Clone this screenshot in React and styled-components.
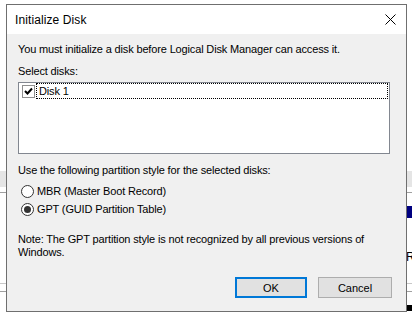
import React from 'react';
import styled, { createGlobalStyle } from 'styled-components';

const GlobalStyle = createGlobalStyle`
  html, body {
    margin: 0;
    padding: 0;
    background: #fff;
  }
  body {
    font-family: "Liberation Sans", Arial, sans-serif;
    font-size: 11px;
    color: #000;
  }
`;

const Screen = styled.div`
  position: relative;
  width: 412px;
  height: 316px;
  overflow: hidden;
  background: #fff;
  display: flex;
  flex-direction: column;
`;

// the app window behind the dialog, only a sliver is visible
const Strip = styled.div`
  height: ${p => p.h}px;
  margin-top: ${p => p.top || 0}px;
  margin-left: ${p => p.left || 0}px;
  background: ${p => p.bg};
  flex-shrink: 0;
`;

const BackText = styled.div`
  margin-top: ${p => p.top}px;
  padding-left: 406px;
  height: 14px;
  line-height: 14px;
  font-size: 12px;
  color: #000;
  white-space: nowrap;
`;

const Dialog = styled.div`
  position: absolute;
  left: 6px;
  top: 4px;
  width: 401px;
  height: 308px;
  box-sizing: border-box;
  border: 1px solid #6f6f6f;
  background: #f0f0f0;
  display: flex;
  flex-direction: column;
`;

const TitleBar = styled.div`
  height: 29px;
  background: #fff;
  display: flex;
  align-items: center;
  justify-content: space-between;
  padding: 0 10px 0 8px;
  flex-shrink: 0;
`;

const Title = styled.span`
  font-family: "Liberation Sans", Arial, sans-serif;
  font-size: 12px;
  letter-spacing: 0.1px;
  color: #000;
`;

const Body = styled.div`
  flex: 1;
  padding: 9px 16px 0 11px;
  display: flex;
  flex-direction: column;
  letter-spacing: -0.15px;
`;

const Line = styled.div`
  line-height: 13px;
  white-space: nowrap;
  margin-top: ${p => p.top || 0}px;
`;

const ListBox = styled.div`
  margin-top: 4px;
  width: 372px;
  height: 72px;
  box-sizing: border-box;
  border: 1px solid #828790;
  background: #fff;
  padding: 0 1px;
`;

const ListItem = styled.div`
  display: flex;
  align-items: center;
  height: 16px;
  gap: 1px;
  padding-left: 2px;
`;

const CheckBox = styled.span`
  width: 13px;
  height: 13px;
  box-sizing: border-box;
  border: 1px solid #8f8f8f;
  background: #fff;
  display: flex;
  align-items: center;
  justify-content: center;
  flex-shrink: 0;
`;

const FocusLabel = styled.span`
  flex: 1;
  height: 16px;
  box-sizing: border-box;
  border: 1px dotted #000;
  line-height: 14px;
  padding-left: 2px;
`;

const RadioGroup = styled.div`
  margin-top: 5px;
  display: flex;
  flex-direction: column;
`;

const RadioRow = styled.label`
  display: flex;
  align-items: center;
  gap: 3px;
  height: 18px;
  padding-left: 3px;
`;

const Radio = styled.span`
  width: 13px;
  height: 13px;
  box-sizing: border-box;
  border-radius: 50%;
  border: 1px solid #333;
  background: #fff;
  display: flex;
  align-items: center;
  justify-content: center;
  &::after {
    content: '';
    width: 7px;
    height: 7px;
    border-radius: 50%;
    background: ${p => (p.checked ? '#333' : 'transparent')};
  }
`;

const Buttons = styled.div`
  margin-top: auto;
  margin-bottom: 13px;
  margin-right: -2px;
  display: flex;
  justify-content: flex-end;
  gap: 11px;
`;

const Button = styled.button`
  width: ${p => p.w}px;
  height: 21px;
  box-sizing: border-box;
  background: #e1e1e1;
  border: ${p => (p.primary ? '2px solid #0078d7' : '1px solid #adadad')};
  font-family: "Liberation Sans", Arial, sans-serif;
  font-size: 11px;
  color: #000;
  padding: 0;
`;

const Close = () => (
  <svg width="11" height="11" viewBox="0 0 11 11">
    <path d="M0.5 0.5 L10.5 10.5 M10.5 0.5 L0.5 10.5" stroke="#000" strokeWidth="1" fill="none" />
  </svg>
);

const Tick = () => (
  <svg width="9" height="9" viewBox="0 0 9 9">
    <path d="M1 4 L3.5 6.5 L8 1.5" stroke="#000" strokeWidth="2" fill="none" />
  </svg>
);

export default function App() {
  return (
    <Screen>
      <GlobalStyle />
      <Strip h={16} top={171} bg="#e5e5e5" />
      <Strip h={1} top={5} bg="#a0a0a0" />
      <Strip h={12} top={13} left={300} bg="#000080" />
      <BackText top={32}>R</BackText>
      <Strip h={1} top={19} bg="#c8c8c8" />
      <Strip h={1} top={7} bg="#a0a0a0" />
      <Strip h={6} top={13} left={13} bg="#000" />

      <Dialog>
        <TitleBar>
          <Title>Initialize Disk</Title>
          <Close />
        </TitleBar>
        <Body>
          <Line>You must initialize a disk before Logical Disk Manager can access it.</Line>
          <Line top={9}>Select disks:</Line>
          <ListBox>
            <ListItem>
              <CheckBox><Tick /></CheckBox>
              <FocusLabel>Disk 1</FocusLabel>
            </ListItem>
          </ListBox>
          <Line top={10}>Use the following partition style for the selected disks:</Line>
          <RadioGroup>
            <RadioRow><Radio />MBR (Master Boot Record)</RadioRow>
            <RadioRow><Radio checked />GPT (GUID Partition Table)</RadioRow>
          </RadioGroup>
          <Line top={15}>Note: The GPT partition style is not recognized by all previous versions of</Line>
          <Line>Windows.</Line>
          <Buttons>
            <Button primary w={72}>OK</Button>
            <Button w={74}>Cancel</Button>
          </Buttons>
        </Body>
      </Dialog>
    </Screen>
  );
}
